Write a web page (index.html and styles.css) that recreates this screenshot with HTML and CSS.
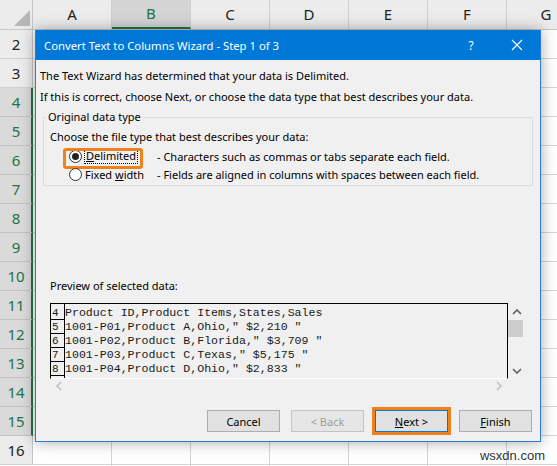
FILE: index.html
```html
<!DOCTYPE html>
<html lang="en">
<head>
    <meta charset="UTF-8">
    <title>Convert Text to Columns Wizard</title>
    <link rel="stylesheet" href="styles.css">
</head>
<body>
    <div class="sheet">
        <div class="corner">
            <svg width="33" height="30" viewBox="0 0 33 30"><polygon points="30,10 30,26 14,26" fill="#b7b7b7"/></svg>
        </div>
        <div class="col-heads">
            <div class="col-head">A</div>
            <div class="col-head selected">B</div>
            <div class="col-head">C</div>
            <div class="col-head">D</div>
            <div class="col-head">E</div>
            <div class="col-head">F</div>
            <div class="col-head">G</div>
        </div>
        <div class="row-heads">
            <div class="row-head">2</div>
            <div class="row-head">3</div>
            <div class="row-head selected">4</div>
            <div class="row-head selected">5</div>
            <div class="row-head selected">6</div>
            <div class="row-head selected">7</div>
            <div class="row-head selected">8</div>
            <div class="row-head selected">9</div>
            <div class="row-head selected">10</div>
            <div class="row-head selected">11</div>
            <div class="row-head selected">12</div>
            <div class="row-head selected">13</div>
            <div class="row-head selected">14</div>
            <div class="row-head selected">15</div>
            <div class="row-head">16</div>
        </div>
        <div class="cells"></div>

        <div class="dialog">
            <div class="titlebar">
                <span class="title">Convert Text to Columns Wizard - Step 1 of 3</span>
                <span class="help">?</span>
                <span class="close">
                    <svg width="12" height="12" viewBox="0 0 12 12"><path d="M1 1 L11 11 M11 1 L1 11" stroke="#fff" stroke-width="1.1"/></svg>
                </span>
            </div>
            <div class="body">
                <p>The Text Wizard has determined that your data is Delimited.</p>
                <p>If this is correct, choose Next, or choose the data type that best describes your data.</p>

                <fieldset class="group">
                    <legend>Original data type</legend>
                    <div class="choose">Choose the file type that best describes your data:</div>
                    <div class="options">
                        <div class="opt focused"><span class="radio checked"></span><span class="focus-label"><u>D</u>elimited</span></div>
                        <div class="desc">- Characters such as commas or tabs separate each field.</div>
                        <div class="opt"><span class="radio"></span><span>Fixed <u>w</u>idth</span></div>
                        <div class="desc">- Fields are aligned in columns with spaces between each field.</div>
                    </div>
                </fieldset>

                <div class="preview-label">Preview of selected data:</div>
                <div class="preview">
                    <div class="data">
                        <div class="nums">
                            <div>4</div>
                            <div>5</div>
                            <div>6</div>
                            <div>7</div>
                            <div>8</div>
                        </div>
                        <div class="lines">Product ID,Product Items,States,Sales
1001-P01,Product A,Ohio," $2,210 "
1001-P02,Product B,Florida," $3,709 "
1001-P03,Product C,Texas," $5,175 "
1001-P04,Product D,Ohio," $2,833 "</div>
                    </div>
                    <div class="vscroll">
                        <svg width="10" height="6" viewBox="0 0 10 6"><polyline points="1,5 5,1 9,5" fill="none" stroke="#606060" stroke-width="1.6"/></svg>
                        <div class="thumb"></div>
                        <svg class="down" width="10" height="6" viewBox="0 0 10 6"><polyline points="1,1 5,5 9,1" fill="none" stroke="#606060" stroke-width="1.6"/></svg>
                    </div>
                    <div class="hscroll">
                        <svg width="6" height="10" viewBox="0 0 6 10"><polyline points="5,1 1,5 5,9" fill="none" stroke="#c2c2c2" stroke-width="1.6"/></svg>
                        <svg width="6" height="10" viewBox="0 0 6 10"><polyline points="1,1 5,5 1,9" fill="none" stroke="#c2c2c2" stroke-width="1.6"/></svg>
                    </div>
                </div>

                <div class="actions">
                    <button>Cancel</button>
                    <button disabled>&lt; Back</button>
                    <button class="default"><u>N</u>ext &gt;</button>
                    <button><u>F</u>inish</button>
                </div>
            </div>
        </div>

        <div class="watermark">wsxdn.com</div>
    </div>
</body>
</html>
```

FILE: styles.css
```css
body {
    margin: 0;
    background: #fff;
    overflow: hidden;
}

/* spreadsheet behind the dialog */
.sheet {
    position: relative;
    width: 557px;
    height: 466px;
    display: grid;
    grid-template-columns: 33px 1fr;
    grid-template-rows: 30px 1fr;
    font-family: "Noto Sans", "Open Sans", sans-serif;
    overflow: hidden;
}
.corner {
    background: #ececec;
    border-bottom: 1px solid #c6c6c6;
    border-right: 1px solid #c6c6c6;
    box-sizing: border-box;
}
.corner svg { display: block; }
.col-heads {
    display: flex;
    background: #ececec;
    border-bottom: 1px solid #c6c6c6;
    box-sizing: border-box;
}
.col-head {
    flex: 0 0 79px;
    box-sizing: border-box;
    border-right: 1px solid #d0d0d0;
    text-align: center;
    font-size: 15px;
    line-height: 29px;
    color: #222;
}
.col-head.selected {
    background: #d4d4d4;
    border-bottom: 2px solid #217346;
    color: #217346;
    line-height: 27px;
}
.row-heads {
    display: flex;
    flex-direction: column;
}
.row-head {
    flex: 0 0 29px;
    box-sizing: border-box;
    background: #ececec;
    border-bottom: 1px solid #d0d0d0;
    border-right: 1px solid #c6c6c6;
    text-align: center;
    font-size: 15px;
    line-height: 28px;
    color: #222;
}
.row-head.selected {
    background: #dadada;
    border-bottom-color: #c2c2c2;
    border-right: 2px solid #217346;
    color: #217346;
    padding-left: 1px;
}
.cells {
    background-image:
        repeating-linear-gradient(to right, transparent 0 78px, #d4d4d4 78px 79px),
        repeating-linear-gradient(to bottom, transparent 0 28px, #d4d4d4 28px 29px);
}

/* wizard window */
.dialog {
    position: absolute;
    left: 35px;
    top: 30px;
    width: 506px;
    height: 412px;
    box-sizing: border-box;
    background: #f0f0f0;
    border: 1px solid #2b7bd0;
    border-top: 0;
    box-shadow: 0 0 14px rgba(0, 0, 0, 0.35);
    display: flex;
    flex-direction: column;
    font-family: "Noto Sans", "Open Sans", sans-serif;
    font-size: 11px;
    color: #000;
}
.titlebar {
    flex: 0 0 30px;
    background: #0078d7;
    color: #fff;
    display: flex;
    align-items: center;
    padding-left: 8px;
    font-size: 11.3px;
}
.title { flex: 1; }
.help, .close {
    width: 46px;
    text-align: center;
}
.help { font-size: 12px; }
.close svg { display: block; margin: 0 auto; }

.body {
    flex: 1;
    display: flex;
    flex-direction: column;
    padding: 5px 7px 9px 4px;
}
.body p {
    margin: 0;
    line-height: 21px;
    white-space: nowrap;
}

.group {
    margin: 0 0 0 3px;
    padding: 0 6px 2px 6px;
    border: 1px solid #dcdcdc;
    min-width: 0;
}
.group legend {
    padding: 0 2px;
    margin-left: -4px;
    line-height: 20px;
}
.choose { line-height: 20px; }
.options {
    display: grid;
    grid-template-columns: 88px auto;
    grid-auto-rows: 18px;
    padding-left: 19px;
    align-items: center;
}
.opt {
    display: flex;
    align-items: center;
    gap: 3px;
    position: relative;
}
.opt.focused::before {
    content: "";
    position: absolute;
    left: -6px;
    top: -1px;
    width: 80px;
    height: 21px;
    box-sizing: border-box;
    border: 3px solid #f0821e;
    border-radius: 3px;
}
.radio {
    width: 13px;
    height: 13px;
    box-sizing: border-box;
    border: 1px solid #333;
    border-radius: 50%;
    background: #fff;
    display: flex;
    align-items: center;
    justify-content: center;
}
.radio.checked::after {
    content: "";
    width: 7px;
    height: 7px;
    border-radius: 50%;
    background: #222;
}
.focus-label {
    outline: 1px dotted #000;
    padding: 0 1px;
    line-height: 14px;
}
.desc { white-space: nowrap; }

.preview-label {
    margin: 90px 0 0 10px;
    line-height: 20px;
}
.preview {
    margin: 7px 0 0 10px;
    width: 475px;
    display: grid;
    grid-template-columns: 458px 17px;
    grid-template-rows: 76px 14px;
}
.data {
    display: flex;
    border: 1px solid #000;
    border-bottom-color: #fff;
    overflow: hidden;
    font-family: "Liberation Mono", monospace;
    font-size: 11.6px;
    color: #1a1a1a;
}
.nums {
    flex: 0 0 13px;
    border-right: 1px solid #000;
    padding-top: 2px;
}
.nums div {
    height: 13px;
    line-height: 14px;
    border-bottom: 1px solid #000;
    padding-left: 1px;
    font-size: 11px;
}
.lines {
    padding-top: 2px;
    white-space: pre;
    line-height: 14px;
}
.vscroll {
    display: flex;
    flex-direction: column;
    align-items: center;
    padding-top: 6px;
}
.vscroll .thumb {
    width: 15px;
    height: 17px;
    margin-top: 5px;
    margin-left: -2px;
    background: #cdcdcd;
}
.vscroll .down { margin-top: auto; margin-bottom: 5px; }
.hscroll {
    display: flex;
    justify-content: space-between;
    align-items: center;
    padding: 0 6px 0 6px;
}

.actions {
    margin-top: auto;
    display: flex;
    justify-content: flex-end;
    gap: 11px;
    padding-right: 1px;
}
.actions button {
    width: 73px;
    height: 22px;
    padding: 0;
    background: #e1e1e1;
    border: 1px solid #adadad;
    font-family: "Noto Sans", "Open Sans", sans-serif;
    font-size: 11px;
    color: #000;
}
.actions button:disabled {
    color: #9d9d9d;
    border-color: #c4c4c4;
    background: #e6e6e6;
}
.actions button.default {
    border-color: #0078d7;
    outline: 3px solid #f0821e;
    outline-offset: 0;
    border-radius: 0;
}

.watermark {
    position: absolute;
    right: 12px;
    bottom: 3px;
    font-family: "Liberation Sans", sans-serif;
    font-size: 13px;
    color: #333;
}
```
